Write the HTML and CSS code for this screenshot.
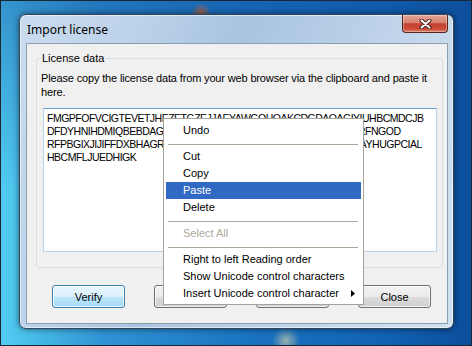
FILE: index.html
```html
<!DOCTYPE html>
<html lang="en">
<head>
    <meta charset="UTF-8">
    <title>Import license</title>
    <link rel="stylesheet" href="styles.css">
</head>
<body>
    <div class="screen">
        <div class="window">
            <div class="titlebar">
                <span class="title">Import license</span>
                <button class="close-btn" type="button" aria-label="Close">
                    <svg width="13" height="10" viewBox="0 0 13 10">
                        <path d="M2.5 1.5 L10.5 8.5 M10.5 1.5 L2.5 8.5" stroke="#40211d" stroke-width="4" stroke-linecap="round"/>
                        <path d="M2.5 1.5 L10.5 8.5 M10.5 1.5 L2.5 8.5" stroke="#ffffff" stroke-width="2" stroke-linecap="round"/>
                    </svg>
                </button>
            </div>

            <div class="client">
                <fieldset class="group">
                    <legend>License data</legend>
                    <p class="hint">Please copy the license data from your web browser via the clipboard and paste it here.</p>
                    <div class="textbox">
                        <div class="line">FMGPFOFVCIGTEVETJHEZETGZEJJAEYAWGOHOAKCDGDAOAGIYIUHBCMDCJB</div>
                        <div class="line">DFDYHNIHDMIQBEBDAGHCJFAEKGBDOHJIEFAGCBHDKEJGAIESARFNGOD</div>
                        <div class="line">RFPBGIXJIJIFFDXBHAGRCFJDHEBGIAKDFJCHEBGDIAFKEHJCBDGAYHUGPCIAL</div>
                        <div class="line">HBCMFLJUEDHIGK</div>
                    </div>
                </fieldset>

                <div class="buttons">
                    <button class="btn btn-hot" type="button">Verify</button>
                    <button class="btn" type="button">Load file...</button>
                    <button class="btn" type="button">Save...</button>
                    <button class="btn" type="button">Close</button>
                </div>
            </div>
        </div>

        <!-- context menu opened over the text box -->
        <ul class="context-menu">
            <li class="item">Undo</li>
            <li class="sep"></li>
            <li class="item">Cut</li>
            <li class="item">Copy</li>
            <li class="item active">Paste</li>
            <li class="item">Delete</li>
            <li class="sep"></li>
            <li class="item disabled">Select All</li>
            <li class="sep"></li>
            <li class="item">Right to left Reading order</li>
            <li class="item">Show Unicode control characters</li>
            <li class="item has-sub">Insert Unicode control character
                <svg class="arrow" width="4" height="7" viewBox="0 0 4 7"><path d="M0 0 L4 3.5 L0 7 Z" fill="#000"/></svg>
            </li>
        </ul>
    </div>
</body>
</html>
```

FILE: styles.css
```css
body {
    margin: 0;
    padding: 0;
    font-family: 'Liberation Sans', Arial, sans-serif;
}

.screen {
    position: relative;
    width: 472px;
    height: 346px;
    box-sizing: border-box;
    overflow: hidden;
    border: 1px solid #1b2633;
    background:
        radial-gradient(circle at 285px 340px, rgba(255, 226, 160, 0.55), rgba(255, 226, 160, 0) 14px),
        radial-gradient(circle at 200px 12px, rgba(190, 90, 40, 0.8), rgba(190, 90, 40, 0) 10px),
        linear-gradient(180deg, rgba(18, 80, 160, 0.45), rgba(18, 80, 160, 0) 55%),
        linear-gradient(90deg, #52cdf1 0%, #2f93d3 22%, #1b74c1 52%, #1162b3 82%, #0b4e9b 100%);
}

/* window frame */
.window {
    width: 435px;
    height: 315px;
    box-sizing: border-box;
    margin: 13px 0 0 18px;
    padding: 0 5px 4px 6px;
    border: 1px solid #34475a;
    border-radius: 7px;
    background: linear-gradient(110deg, #cadcef 0%, #bcd2e9 22%, #a9c4e0 42%, #b6cde6 58%, #c8daed 80%, #d0e0f0 100%);
    box-shadow: 0 0 6px rgba(0, 0, 0, 0.55), inset 0 0 0 1px rgba(255, 255, 255, 0.55);
}

.titlebar {
    height: 28px;
    display: flex;
    justify-content: space-between;
    align-items: flex-start;
}

.title {
    padding-left: 1px;
    line-height: 29px;
    font-family: 'Noto Sans', 'Open Sans', sans-serif;
    font-size: 12px;
    color: #000;
}

.close-btn {
    width: 46px;
    height: 18px;
    padding: 0;
    border: 1px solid #5a2520;
    border-top: none;
    border-radius: 0 0 4px 4px;
    background: linear-gradient(#e4a596 0%, #d77f70 45%, #c4412f 52%, #c84b38 80%, #de7d62 100%);
    box-shadow: inset 0 0 0 1px rgba(255, 255, 255, 0.35);
    display: flex;
    justify-content: center;
    align-items: center;
}

/* dialog body */
.client {
    height: 281px;
    box-sizing: border-box;
    border: 1px solid #8c9db1;
    background: #f0f0f0;
    font-size: 11px;
    color: #000;
}

.group {
    width: 407px;
    box-sizing: border-box;
    margin: 8px 0 0 9px;
    padding: 6px 5px 15px 4px;
    border: 1px solid #d5dfe5;
    border-radius: 3px;
}

.group legend {
    padding: 0 1px;
    line-height: 13px;
}

.hint {
    margin: 0;
    line-height: 14px;
    letter-spacing: -0.15px;
}

.textbox {
    width: 394px;
    height: 144px;
    box-sizing: border-box;
    margin: 9px 0 0 2px;
    padding: 3px 3px;
    background: #fff;
    border: 1px solid #b5d3ec;
    border-top-color: #6d9fcb;
    font-size: 10.5px;
    letter-spacing: -0.5px;
    line-height: 13px;
}

.line {
    white-space: nowrap;
}

.buttons {
    display: flex;
    gap: 29px;
    margin: 17px 0 0 25px;
}

.btn {
    width: 73px;
    height: 23px;
    padding: 0;
    border: 1px solid #707070;
    border-radius: 3px;
    background: linear-gradient(#f2f2f2 0%, #ebebeb 50%, #dddddd 50%, #cfcfcf 100%);
    box-shadow: inset 0 0 0 1px rgba(255, 255, 255, 0.7);
    font-family: 'Liberation Sans', Arial, sans-serif;
    font-size: 11px;
    color: #000;
}

.btn-hot {
    border-color: #3c7fb1;
    background: linear-gradient(#eaf6fd 0%, #d9f0fc 50%, #bee6fd 50%, #a7d9f5 100%);
}

/* context menu */
.context-menu {
    position: absolute;
    left: 162px;
    top: 117px;
    width: 201px;
    box-sizing: border-box;
    margin: 0;
    padding: 3px 1px 2px 1px;
    list-style: none;
    background: #fff;
    border: 1px solid #a7a59b;
    font-size: 11px;
}

.item {
    height: 17px;
    line-height: 17px;
    padding-left: 17px;
    margin: 0 1px 0 1px;
    display: flex;
    align-items: center;
    justify-content: space-between;
    padding-right: 6px;
}

.item.active {
    background: #316ac5;
    color: #fff;
}

.item.disabled {
    color: #aca899;
}

.sep {
    height: 1px;
    margin: 5px 4px 3px 3px;
    background: #aca899;
}
```
